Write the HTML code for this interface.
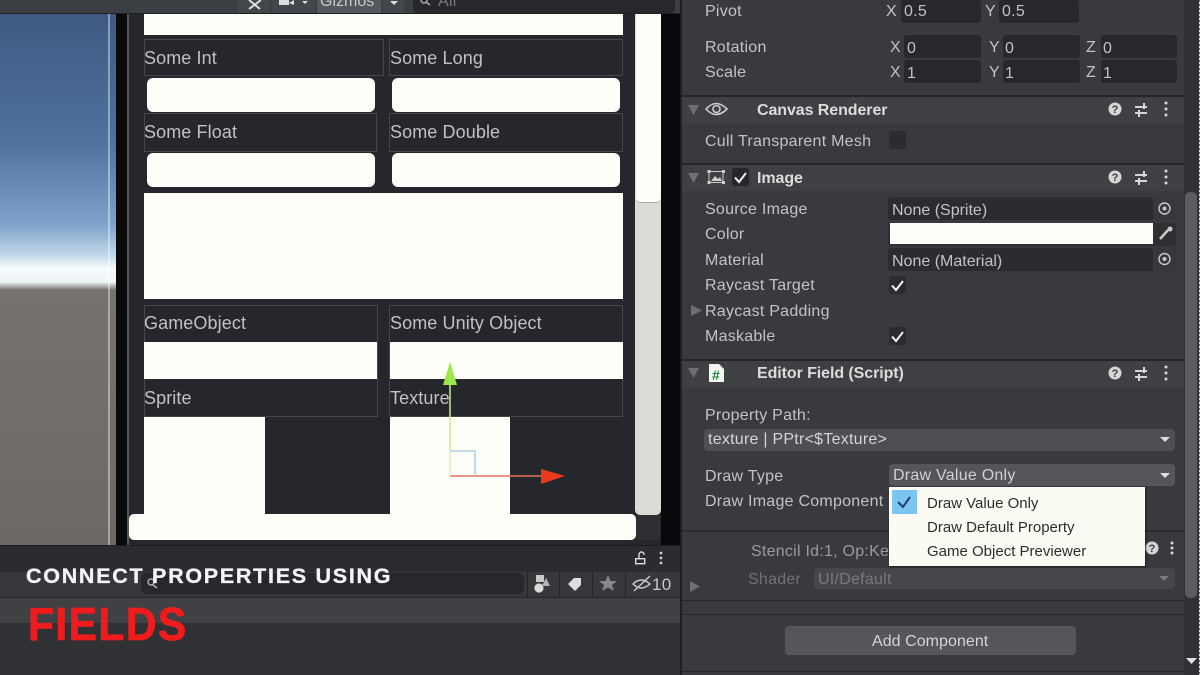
<!DOCTYPE html>
<html><head><meta charset="utf-8"><style>
html,body{margin:0;padding:0;background:#2f3135}
#p{position:relative;width:1200px;height:675px;overflow:hidden;background:#2f3135;font-family:"Liberation Sans",sans-serif;filter:blur(.35px)}
#p div{position:absolute}
.t{white-space:nowrap;line-height:20px;font-size:16px;color:#c2c3c4;letter-spacing:.25px;margin-top:1px}
.g{font-size:18px;color:#c0c1c2;letter-spacing:.1px;margin-top:0}
.w{background:#fefef8}
.h{background:#26272c;border:1px solid #46474b;box-sizing:border-box}
.i{background:#fefef8;border-radius:6px}
.n{background:#26282c;border-radius:3px;height:23px}
.b{font-weight:bold;color:#dcdcdc;letter-spacing:-.08px}
.hd{left:682px;width:502px;background:#3e4044;height:26px;border-top:2px solid #232529;box-sizing:content-box}
.c{background:#2a2c30;border-radius:3px;width:17px;height:18px;left:889px}
.m{font-size:15px;letter-spacing:0;color:#2b2d30}
svg{position:absolute;overflow:visible}
</style></head><body><div id="p">
<!-- sky -->
<div style="left:0;top:14px;width:116px;height:531px;background:linear-gradient(#3e5a82 0,#4f729f 130px,#7fa3cc 211px,#c0d8e8 241px,#f5fbfc 254px,#eef5f5 268px,#777270 276px,#6e6864 531px)"></div>
<div style="left:108px;top:14px;width:2px;height:531px;background:#fff;opacity:.4"></div>
<div style="left:116px;top:14px;width:11px;height:531px;background:#0a0a0b"></div>
<div style="left:127px;top:14px;width:2px;height:531px;background:#55565a"></div>
<div style="left:129px;top:14px;width:532px;height:531px;background:#26272c"></div>
<div style="left:661px;top:14px;width:20px;height:531px;background:#08090a"></div>

<!-- top toolbar -->
<div style="left:0;top:0;width:680px;height:14px;background:#3b3e42;border-bottom:1px solid #1e2023;box-sizing:border-box"></div>
<div style="left:237px;top:0;width:33px;height:13px;background:#43464a"></div>
<div style="left:272px;top:0;width:43px;height:13px;background:#43464a"></div>
<div style="left:317px;top:0;width:64px;height:13px;background:#55585c"></div>
<div style="left:383px;top:0;width:21px;height:13px;background:#43464a"></div>
<div style="left:413px;top:0;width:262px;height:13px;background:#26282c;border-radius:0 0 4px 4px"></div>
<svg style="left:0;top:0" width="680" height="14"><path d="M249 0L260 9M261 0L249 9" stroke="#ddd" stroke-width="2" fill="none"/><rect x="279" y="0" width="10" height="5" fill="#ddd"/><path d="M289 3L294 0V5Z" fill="#ddd"/><path d="M302 1H308L305 4Z" fill="#ddd"/><path d="M390 1H398L394 5Z" fill="#ddd"/><circle cx="424" cy="0" r="3" stroke="#aaa" stroke-width="1.5" fill="none"/><path d="M426 2L430 5" stroke="#aaa" stroke-width="1.5"/></svg>
<div class="t" style="left:320px;top:-9px;color:#c8c9ca;letter-spacing:0">Gizmos</div>
<div class="t" style="left:438px;top:-9px;color:#77797c">All</div>

<!-- game view -->
<div class="w" style="left:144px;top:14px;width:479px;height:21px"></div>

<div class="h" style="left:144px;top:39px;width:240px;height:37px"></div>
<div class="h" style="left:389px;top:39px;width:234px;height:37px"></div>
<div class="t g" style="left:144px;top:48px">Some Int</div>
<div class="t g" style="left:390px;top:48px">Some Long</div>
<div class="i" style="left:147px;top:78px;width:228px;height:34px"></div>
<div class="i" style="left:392px;top:78px;width:228px;height:34px"></div>

<div class="h" style="left:144px;top:113px;width:233px;height:39px"></div>
<div class="h" style="left:389px;top:113px;width:234px;height:39px"></div>
<div class="t g" style="left:144px;top:122px">Some Float</div>
<div class="t g" style="left:390px;top:122px">Some Double</div>
<div class="i" style="left:147px;top:153px;width:228px;height:34px"></div>
<div class="i" style="left:392px;top:153px;width:228px;height:34px"></div>

<div class="w" style="left:144px;top:193px;width:479px;height:106px"></div>

<div class="h" style="left:144px;top:305px;width:234px;height:112px"></div>
<div class="h" style="left:389px;top:305px;width:234px;height:112px"></div>
<div class="t g" style="left:144px;top:313px">GameObject</div>
<div class="t g" style="left:390px;top:313px">Some Unity Object</div>
<div class="w" style="left:144px;top:342px;width:233px;height:37px"></div>
<div class="w" style="left:390px;top:342px;width:233px;height:37px"></div>
<div class="t g" style="left:144px;top:388px">Sprite</div>
<div class="t g" style="left:390px;top:388px">Texture</div>
<div class="w" style="left:144px;top:417px;width:121px;height:97px"></div>
<div class="w" style="left:390px;top:417px;width:120px;height:97px"></div>

<!-- scroll bars -->
<div style="left:635px;top:14px;width:26px;height:501px;background:#dcdcd6;border-radius:0 0 5px 5px"></div>
<div class="w" style="left:636px;top:14px;width:25px;height:189px;border-radius:0 0 5px 5px;border-bottom:1px solid #a5a5a0;box-sizing:border-box"></div>
<div style="left:636px;top:515px;width:24px;height:25px;background:#2e2f33;border-radius:0 0 4px 4px"></div>
<div class="w" style="left:129px;top:514px;width:507px;height:26px;border-radius:5px"></div>

<!-- gizmo -->
<svg style="left:0;top:0" width="680" height="545">
<path d="M450 384V476" stroke="#c8ef8c" stroke-width="1.5"/>
<path d="M450 362L457 385H443Z" fill="#9ce84a"/>
<path d="M450 476H545" stroke="#e8705c" stroke-width="1.5"/>
<path d="M565 476L541 469V484Z" fill="#ea3a1c"/>
<path d="M450 451H475V476" stroke="#a9cfe8" stroke-width="1.5" fill="none"/>
<path d="M450 451V476" stroke="#e4f2d2" stroke-width="1.5"/>
</svg>

<!-- bottom panel -->
<div style="left:0;top:545px;width:680px;height:26px;background:#2a2c30;border-top:1px solid #1d1e21;box-sizing:border-box"></div>
<div style="left:0;top:571px;width:680px;height:26px;background:#36383c;border-top:1px solid #2b2d30;box-sizing:border-box"></div>
<div style="left:0;top:597px;width:680px;height:26px;background:#3f4145;border-top:1px solid #232528;box-sizing:border-box"></div>
<div style="left:141px;top:573px;width:383px;height:21px;background:#26282c;border-radius:5px"></div>
<div style="left:527px;top:571px;width:1px;height:26px;background:#232528"></div>
<div style="left:559px;top:571px;width:1px;height:26px;background:#232528"></div>
<div style="left:592px;top:571px;width:1px;height:26px;background:#232528"></div>
<div style="left:625px;top:571px;width:1px;height:26px;background:#232528"></div>
<svg style="left:0;top:545px" width="680" height="60">
<path d="M639 13V9.500A2.500 2.500 0 0 1 644 9.500V10" stroke="#ddd" stroke-width="1.400" fill="none"/>
<rect x="635.700" y="13.700" width="9" height="5" stroke="#ddd" stroke-width="1.400" fill="none"/>
<circle cx="661" cy="8" r="1.400" fill="#ccc"/><circle cx="661" cy="13" r="1.400" fill="#ccc"/><circle cx="661" cy="18" r="1.400" fill="#ccc"/>
<rect x="536" y="30" width="8" height="7" fill="#c9c9c9"/><circle cx="539" cy="43" r="4.600" fill="#dbdbdb"/><path d="M546 33L550 41H542Z" fill="#b5b5b5"/>
<path d="M568 39L574 33H581V40L575 46Z" fill="#ddd"/>
<path d="M608 30L610.500 36H617L612 40L614 46L608 42.500L602 46L604 40L599 36H605.500Z" fill="#85878a"/>
<path d="M633 39Q641 31 650 39Q641 47 633 39Z" stroke="#ccc" stroke-width="1.400" fill="none"/>
<path d="M634 46L650 31" stroke="#ccc" stroke-width="1.400"/>
</svg>
<div class="t" style="left:652px;top:574px;font-size:17px;color:#c8c9ca">10</div>

<!-- magnifier -->
<svg style="left:0;top:0" width="200" height="675"><circle cx="151" cy="582" r="3" stroke="#b0b0b0" stroke-width="1.400" fill="none"/><path d="M153 585L157 588" stroke="#b0b0b0" stroke-width="1.600"/></svg>

<!-- title -->
<div style="left:26px;top:563px;font-size:21.5px;line-height:26px;font-weight:bold;color:#f4f5f6;letter-spacing:1.72px;white-space:nowrap;-webkit-text-stroke:.3px #f4f5f6">CONNECT PROPERTIES USING</div>
<div style="left:28px;top:598px;font-size:46px;line-height:52px;font-weight:bold;color:#ee1c1c;letter-spacing:1.5px;white-space:nowrap;transform:scaleX(.925);transform-origin:left;-webkit-text-stroke:.8px #ee1c1c">FIELDS</div>

<!-- inspector -->
<div style="left:680px;top:0;width:2px;height:675px;background:#1d1f22"></div>
<div style="left:682px;top:0;width:502px;height:675px;background:#383a3f"></div>
<div style="left:1184px;top:0;width:14px;height:675px;background:#2f3135"></div>
<div style="left:1185px;top:192px;width:12px;height:406px;background:#5a5c60;border-radius:5px"></div>
<div style="left:1199px;top:0;width:1px;height:675px;background:repeating-linear-gradient(#3d78b8 0 2px,#e4e8ee 2px 4px)"></div>
<svg style="left:0;top:0" width="1200" height="675"><path d="M1186 658H1197L1191.500 664Z" fill="#e0e0e0"/></svg>

<div class="t" style="left:705px;top:1px">Pivot</div>
<div class="t" style="left:705px;top:37px">Rotation</div>
<div class="t" style="left:705px;top:62px">Scale</div>
<div class="t" style="left:886px;top:1px">X</div><div class="n" style="left:901px;top:0;width:80px"></div><div class="t" style="left:904px;top:1px">0.5</div>
<div class="t" style="left:985px;top:1px">Y</div><div class="n" style="left:999px;top:0;width:80px"></div><div class="t" style="left:1002px;top:1px">0.5</div>
<div class="t" style="left:890px;top:37px">X</div><div class="n" style="left:904px;top:35px;width:77px"></div><div class="t" style="left:907px;top:38px">0</div>
<div class="t" style="left:989px;top:37px">Y</div><div class="n" style="left:1003px;top:35px;width:77px"></div><div class="t" style="left:1005px;top:38px">0</div>
<div class="t" style="left:1086px;top:37px">Z</div><div class="n" style="left:1101px;top:35px;width:76px"></div><div class="t" style="left:1103px;top:38px">0</div>
<div class="t" style="left:890px;top:62px">X</div><div class="n" style="left:904px;top:60px;width:77px"></div><div class="t" style="left:907px;top:63px">1</div>
<div class="t" style="left:989px;top:62px">Y</div><div class="n" style="left:1003px;top:60px;width:77px"></div><div class="t" style="left:1005px;top:63px">1</div>
<div class="t" style="left:1086px;top:62px">Z</div><div class="n" style="left:1101px;top:60px;width:76px"></div><div class="t" style="left:1103px;top:63px">1</div>

<div class="hd" style="top:95px"></div>
<div class="t b" style="left:757px;top:100px">Canvas Renderer</div>
<div class="t" style="left:705px;top:131px">Cull Transparent Mesh</div>
<div class="c" style="top:131px"></div>

<div class="hd" style="top:163px"></div>
<div class="c" style="left:732px;top:168px;background:#25272b"></div>
<div class="t b" style="left:757px;top:168px">Image</div>
<div class="t" style="left:705px;top:199px">Source Image</div>
<div class="t" style="left:705px;top:224px">Color</div>
<div class="t" style="left:705px;top:250px">Material</div>
<div class="t" style="left:705px;top:275px">Raycast Target</div>
<div class="t" style="left:705px;top:301px">Raycast Padding</div>
<div class="t" style="left:705px;top:326px">Maskable</div>

<div style="left:888px;top:197px;width:288px;height:23px;background:#2a2c30;border-radius:3px"></div>
<div style="left:1153px;top:197px;width:23px;height:23px;background:#36383c;border-radius:0 3px 3px 0"></div>
<div class="t" style="left:892px;top:200px;letter-spacing:0">None (Sprite)</div>
<div style="left:888px;top:223px;width:288px;height:23px;background:#2d2f33;border-radius:3px"></div>
<div class="w" style="left:890px;top:223px;width:263px;height:21px"></div>
<div style="left:888px;top:248px;width:288px;height:23px;background:#2a2c30;border-radius:3px"></div>
<div style="left:1153px;top:248px;width:23px;height:23px;background:#36383c;border-radius:0 3px 3px 0"></div>
<div class="t" style="left:892px;top:251px;letter-spacing:0">None (Material)</div>
<div class="c" style="top:276px"></div>
<div class="c" style="top:327px"></div>

<div class="hd" style="top:359px"></div>
<div class="t b" style="left:757px;top:363px">Editor Field (Script)</div>
<div class="t" style="left:705px;top:405px">Property Path:</div>
<div style="left:704px;top:429px;width:471px;height:22px;background:#4d4f53;border-radius:4px"></div>
<div class="t" style="left:708px;top:429px;color:#d4d5d6">texture | PPtr&lt;$Texture&gt;</div>
<div class="t" style="left:705px;top:466px">Draw Type</div>
<div class="t" style="left:705px;top:491px">Draw Image Component</div>
<div style="left:889px;top:464px;width:286px;height:22px;background:#54565a;border-radius:4px"></div>
<div class="t" style="left:893px;top:465px;color:#d0d1d2">Draw Value Only</div>

<div style="left:682px;top:530px;width:502px;height:2px;background:#2a2c30"></div>
<div class="t" style="left:751px;top:541px;color:#9a9b9d">Stencil Id:1, Op:Keep</div>
<div class="t" style="left:748px;top:569px;color:#6f7174">Shader</div>
<div style="left:814px;top:568px;width:361px;height:21px;background:#45474b;border-radius:4px"></div>
<div class="t" style="left:818px;top:569px;color:#77797c">UI/Default</div>
<div style="left:682px;top:600px;width:502px;height:1px;background:#26282b"></div>
<div style="left:682px;top:614px;width:502px;height:1px;background:#26282b"></div>
<div style="left:785px;top:626px;width:291px;height:29px;background:#54565a;border-radius:4px"></div>
<div class="t" style="left:872px;top:631px;color:#d4d5d6;letter-spacing:.05px">Add Component</div>
<div style="left:682px;top:671px;width:502px;height:1px;background:#26282b"></div>

<!-- inspector icons -->
<svg style="left:0;top:0" width="1200" height="675">
<g fill="#6d6f73"><path d="M688 105H699L693.500 115Z"/><path d="M688 173H699L693.500 183Z"/><path d="M688 368H699L693.500 378Z"/><path d="M691 305L702 310.500L691 316Z"/><path d="M690 581L700 586.500L690 592Z"/></g>
<path d="M706 109Q716 98 727 109Q716 120 706 109Z" stroke="#ccc" stroke-width="1.600" fill="none"/><circle cx="716.500" cy="109" r="3.500" stroke="#ccc" stroke-width="1.600" fill="none"/>
<rect x="709" y="171.500" width="14" height="11" stroke="#ccc" stroke-width="1" fill="none"/>
<g fill="#ccc"><rect x="707.500" y="170" width="3" height="3"/><rect x="722" y="170" width="3" height="3"/><rect x="707.500" y="181" width="3" height="3"/><rect x="722" y="181" width="3" height="3"/><path d="M711 181L715 176L718 179L720 177L722 181Z"/></g>
<path d="M709 364H719L724 369V382H709Z" fill="#f4f6f0"/><text x="712" y="380" font-family="Liberation Sans" font-size="14" font-weight="bold" fill="#1c8a3c">#</text>
<g stroke="#f2f2f2" stroke-width="2" fill="none"><path d="M735 177.500L739 182L746 173"/><path d="M892 285.500L896 290L903 281"/><path d="M892 336.500L896 341L903 332"/></g>
<g>
<circle cx="1115" cy="109" r="6.500" fill="#d6d6d6"/><circle cx="1115" cy="177" r="6.500" fill="#d6d6d6"/><circle cx="1115" cy="373" r="6.500" fill="#d6d6d6"/><circle cx="1152" cy="548" r="6.500" fill="#d6d6d6"/>
<g fill="#d6d6d6">
<path d="M1135 106H1147V108H1135ZM1135 112H1147V114H1135ZM1143 103H1145V109H1143ZM1138 110H1140V117H1138Z"/>
<path d="M1135 174H1147V176H1135ZM1135 180H1147V182H1135ZM1143 171H1145V177H1143ZM1138 178H1140V185H1138Z"/>
<path d="M1135 370H1147V372H1135ZM1135 376H1147V378H1135ZM1143 367H1145V373H1143ZM1138 374H1140V381H1138Z"/>
<circle cx="1166" cy="103" r="1.500"/><circle cx="1166" cy="109" r="1.500"/><circle cx="1166" cy="115" r="1.500"/>
<circle cx="1166" cy="171" r="1.500"/><circle cx="1166" cy="177" r="1.500"/><circle cx="1166" cy="183" r="1.500"/>
<circle cx="1166" cy="367" r="1.500"/><circle cx="1166" cy="373" r="1.500"/><circle cx="1166" cy="379" r="1.500"/>
<circle cx="1172" cy="543" r="1.500"/><circle cx="1172" cy="548" r="1.500"/><circle cx="1172" cy="553" r="1.500"/>
</g>
<g font-family="Liberation Sans" font-size="11" font-weight="bold" fill="#383a3f" text-anchor="middle"><text x="1115" y="113">?</text><text x="1115" y="181">?</text><text x="1115" y="377">?</text><text x="1152" y="552">?</text></g>
</g>
<circle cx="1164.500" cy="208.500" r="5.500" stroke="#c8c8c8" stroke-width="1.400" fill="none"/><circle cx="1164.500" cy="208.500" r="2" fill="#c8c8c8"/>
<circle cx="1164.500" cy="259" r="5.500" stroke="#c8c8c8" stroke-width="1.400" fill="none"/><circle cx="1164.500" cy="259" r="2" fill="#c8c8c8"/>
<path d="M1160 239L1168 230" stroke="#c8c8c8" stroke-width="2.500"/><circle cx="1170" cy="229" r="2.500" fill="#c8c8c8"/>
<g fill="#dedede"><path d="M1160 437H1170L1165 442Z"/><path d="M1160 473H1170L1165 478Z"/></g>
<path d="M1159 576H1169L1164 581Z" fill="#77797c"/>
</svg>

<!-- dropdown -->
<div style="left:889px;top:487px;width:256px;height:79px;background:#fbfbf4;box-shadow:1px 1px 2px rgba(0,0,0,.5)"></div>
<div style="left:892px;top:490px;width:25px;height:24px;background:#7cc4f2"></div>
<svg style="left:0;top:0" width="1200" height="675"><path d="M898 502L903 507L910 497" stroke="#1f3f63" stroke-width="2" fill="none"/></svg>
<div class="t m" style="left:927px;top:493px">Draw Value Only</div>
<div class="t m" style="left:927px;top:517px">Draw Default Property</div>
<div class="t m" style="left:927px;top:541px">Game Object Previewer</div>
</div></body></html>
